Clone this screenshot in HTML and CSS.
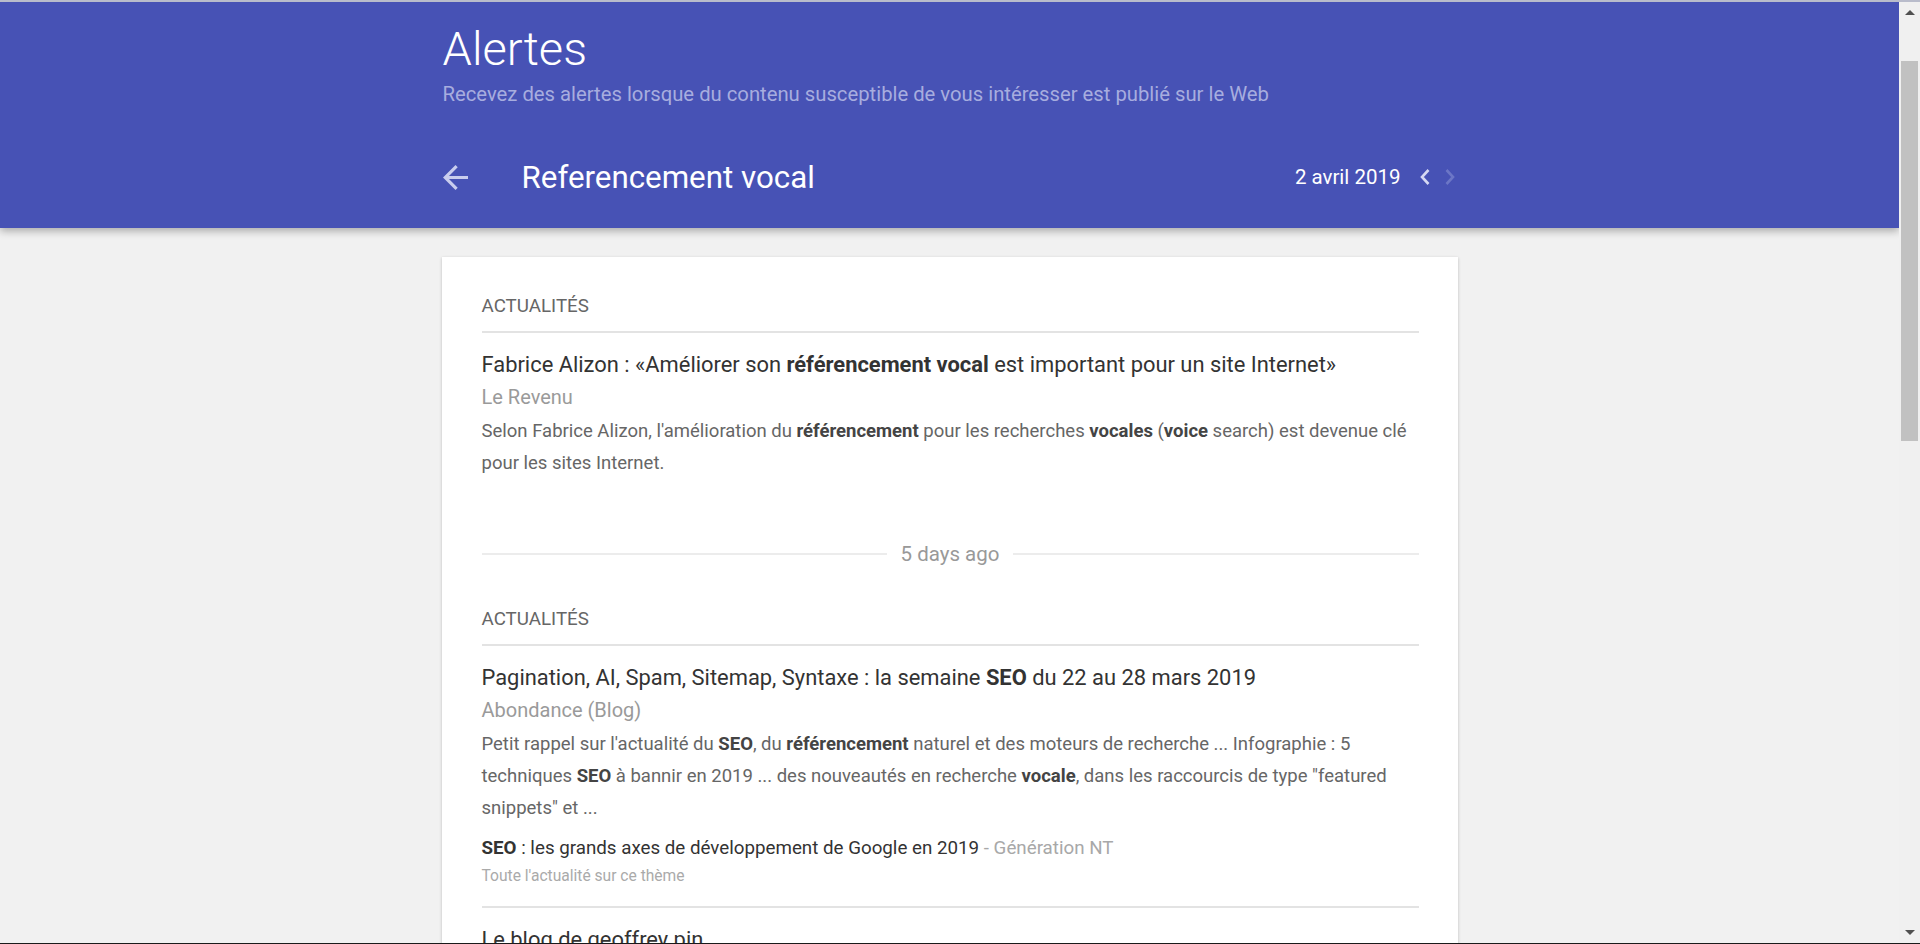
FILE: index.html
```html
<!DOCTYPE html>
<html lang="fr">
<head>
<meta charset="utf-8">
<title>Alertes</title>
<link rel="stylesheet" href="styles.css">
</head>
<body>
<div class="window">
  <div class="viewport">
    <header class="appbar">
      <div class="wrap">
        <h1 class="app-title">Alertes</h1>
        <p class="app-sub">Recevez des alertes lorsque du contenu susceptible de vous intéresser est publié sur le Web</p>
        <div class="bar">
          <svg class="back" viewBox="4 4 16 16" width="25" height="25"><path d="M20 11H7.83l5.59-5.59L12 4l-8 8 8 8 1.41-1.41L7.83 13H20v-2z" fill="currentColor"/></svg>
          <div class="bar-title">Referencement vocal</div>
          <div class="bar-date">2 avril 2019</div>
          <svg class="chev chev-on" viewBox="0 0 12 18" width="12" height="18"><polyline points="9.5,2 3,9 9.5,16" fill="none" stroke="currentColor" stroke-width="2.6"/></svg>
          <svg class="chev chev-off" viewBox="0 0 12 18" width="12" height="18"><polyline points="2.5,2 9,9 2.5,16" fill="none" stroke="currentColor" stroke-width="2.6"/></svg>
        </div>
      </div>
    </header>

    <main class="wrap content">
      <div class="card">
        <section class="group">
          <div class="group-label">ACTUALITÉS</div>
          <article class="item item-last">
            <div class="item-title">Fabrice Alizon : «Améliorer son <b>référencement vocal</b> est important pour un site Internet»</div>
            <div class="item-source">Le Revenu</div>
            <div class="item-snippet">Selon Fabrice Alizon, l'amélioration du <b>référencement</b> pour les recherches <b>vocales</b> (<b>voice</b> search) est devenue clé pour les sites Internet.</div>
          </article>
        </section>

        <div class="day-sep"><span class="day-line"></span><span class="day-text">5 days ago</span><span class="day-line"></span></div>

        <section class="group">
          <div class="group-label">ACTUALITÉS</div>
          <article class="item">
            <div class="item-title">Pagination, AI, Spam, Sitemap, Syntaxe : la semaine <b>SEO</b> du 22 au 28 mars 2019</div>
            <div class="item-source">Abondance (Blog)</div>
            <div class="item-snippet">Petit rappel sur l'actualité du <b>SEO</b>, du <b>référencement</b> naturel et des moteurs de recherche ... Infographie : 5 techniques <b>SEO</b> à bannir en 2019 ... des nouveautés en recherche <b>vocale</b>, dans les raccourcis de type "featured snippets" et ...</div>
            <div class="related"><b>SEO</b> : les grands axes de développement de Google en 2019 <span class="related-src">- Génération NT</span></div>
            <div class="more">Toute l'actualité sur ce thème</div>
          </article>
          <article class="item">
            <div class="item-title">Le blog de geoffrey pin</div>
          </article>
        </section>
      </div>
    </main>
  </div>
  <div class="scrollbar">
    <div class="sb-btn"><span class="sb-up"></span></div>
    <div class="sb-track"><div class="sb-thumb"></div></div>
    <div class="sb-btn"><span class="sb-down"></span></div>
  </div>
</div>
</body>
</html>
```
FILE: styles.css
```css
* { box-sizing: border-box; }
html, body { margin: 0; padding: 0; height: 100%; }
body {
  font-family: Roboto, "Liberation Sans", Arial, sans-serif;
  background: #f1f1f1;
  overflow: hidden;
}
.window {
  display: flex;
  height: 944px;
  border-top: 2px solid #b9bccb;
  border-bottom: 1px solid #1a1a1a;
}
.viewport {
  flex: 1;
  min-width: 0;
  overflow: hidden;
  background: #f1f1f1;
}
.wrap {
  width: 1016px;
  margin: 0 auto;
}
.appbar {
  background: #4752b5;
  height: 226px;
  box-shadow: 0 3px 8px rgba(0,0,0,0.3);
  position: relative;
  z-index: 1;
}
.appbar .wrap { padding-top: 21px; padding-left: 1px; }
.app-title {
  margin: 0;
  font-weight: 300;
  font-size: 47px;
  line-height: 52px;
  color: #fff;
}
.app-sub {
  margin: 7px 0 0;
  font-size: 20.25px;
  line-height: 24px;
  color: #a7addf;
}
.bar {
  display: flex;
  align-items: center;
  height: 56px;
  margin-top: 43px;
}
.back { color: #c9cdee; flex: none; }
.bar-title {
  margin-left: 54px;
  font-size: 31.3px;
  color: #fff;
  flex: 1;
}
.bar-date {
  font-size: 20.5px;
  color: #fff;
  margin-right: 18px;
}
.chev { flex: none; }
.chev-on { color: #d6d9f3; }
.chev-off { color: #6c76c6; margin-left: 13px; margin-right: 2px; }

.content { padding-top: 29px; }
.card {
  background: #fff;
  box-shadow: 0 1px 3px rgba(0,0,0,0.22);
  padding: 0 39px 0 40px;
}
.group-label {
  padding-top: 37px;
  padding-bottom: 13px;
  font-size: 18.75px;
  line-height: 24px;
  color: #666;
  border-bottom: 2px solid #e3e3e3;
}
.item {
  padding-top: 15px;
  padding-bottom: 16px;
  border-bottom: 2px solid #e3e3e3;
}
.item-last { border-bottom: none; padding-bottom: 0; }
.item-title {
  font-size: 21.9px;
  line-height: 33px;
  color: #333;
}
.item-title b { font-weight: 700; }
.item-source {
  font-size: 20px;
  line-height: 33px;
  color: #9a9a9a;
}
.item-snippet {
  margin-top: 1px;
  font-size: 18.5px;
  line-height: 32px;
  color: #666;
}
.item-snippet b { color: #444; }
.related {
  margin-top: 10px;
  font-size: 18.75px;
  line-height: 28px;
  color: #333;
}
.related-src { color: #a8a8a8; }
.more {
  font-size: 15.6px;
  line-height: 28px;
  color: #aaa;
}
.day-sep {
  display: flex;
  align-items: center;
  height: 32px;
  margin-top: 59px;
}
.day-line { flex: 1; height: 2px; background: #ececec; }
.day-text {
  padding: 0 14px;
  font-size: 20.5px;
  color: #999;
}

.scrollbar {
  width: 21px;
  flex: none;
  background: #f0f0f0;
  display: flex;
  flex-direction: column;
}
.sb-btn {
  height: 21px;
  display: flex;
  align-items: center;
  justify-content: center;
}
.sb-up, .sb-down {
  width: 0; height: 0;
  border-left: 5px solid transparent;
  border-right: 5px solid transparent;
}
.sb-up { border-bottom: 5px solid #505050; }
.sb-down { border-top: 5px solid #505050; }
.sb-track { flex: 1; padding: 38px 2px 0 2px; }
.sb-thumb { height: 380px; background: #c1c1c1; }
```
